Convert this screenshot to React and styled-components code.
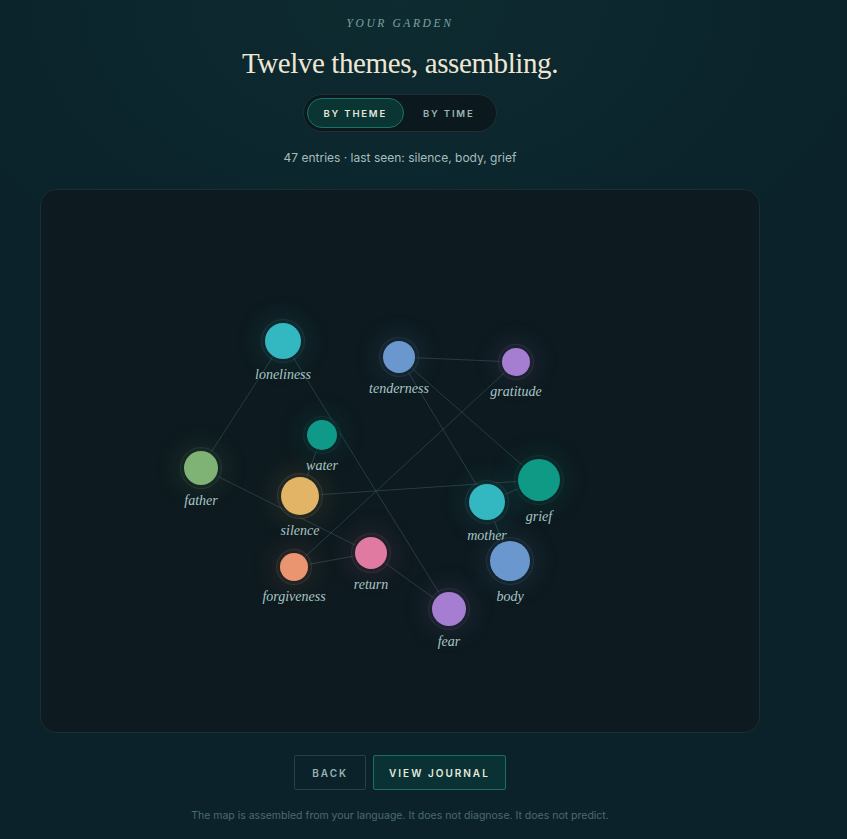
import * as React from "react";
import styled, { createGlobalStyle } from "styled-components";

const GlobalStyle = createGlobalStyle`
  html, body {
    margin: 0;
    padding: 0;
    background: #0b232a;
  }
  body {
    font-family: Inter, "Open Sans", sans-serif;
    -webkit-font-smoothing: antialiased;
  }
`;

const Backdrop = styled.div`
  min-height: 839px;
  background: radial-gradient(ellipse 60% 40% at 47% 0%, #0d2b30 0%, rgba(11, 35, 42, 0) 100%),
    #0b222a;
`;

const Page = styled.div`
  width: 800px;
  box-sizing: border-box;
  padding-top: 16px;
  display: flex;
  flex-direction: column;
  align-items: center;
`;

const Eyebrow = styled.div`
  font-family: "Liberation Serif", "DejaVu Serif", serif;
  font-style: italic;
  font-size: 11.5px;
  letter-spacing: 2.6px;
  color: #7ea3a2;
  line-height: 14px;
`;

const Title = styled.h1`
  margin: 16px 0 0;
  font-family: "Liberation Serif", "DejaVu Serif", serif;
  font-weight: 400;
  font-size: 29px;
  line-height: 34px;
  letter-spacing: -0.4px;
  color: #efe6d5;
`;

const Toggle = styled.div`
  margin-top: 14px;
  display: flex;
  padding: 3px;
  border-radius: 20px;
  border: 1px solid #1d3034;
  background: #0b191e;
`;

const ToggleOption = styled.button`
  font-family: Inter, "Open Sans", sans-serif;
  font-size: 9.5px;
  font-weight: 600;
  letter-spacing: 1.8px;
  height: 30px;
  padding: 0 ${(p) => (p.$active ? "16px" : "18px")};
  border-radius: 16px;
  border: 1px solid ${(p) => (p.$active ? "#1d7466" : "transparent")};
  background: ${(p) => (p.$active ? "#0a3532" : "transparent")};
  color: ${(p) => (p.$active ? "#e4e6dc" : "#9bb5b4")};
  cursor: pointer;
`;

const Meta = styled.div`
  margin-top: 18px;
  font-size: 12px;
  color: #a6bdbd;
  line-height: 16px;
`;

const Canvas = styled.div`
  position: relative;
  margin-top: 23px;
  width: 720px;
  height: 544px;
  box-sizing: border-box;
  border: 1px solid #1a2f33;
  border-radius: 16px;
  background: #0d1a1f;
  overflow: hidden;
`;

const Edges = styled.svg`
  position: absolute;
  inset: 0;
`;

const Node = styled.div`
  position: absolute;
  width: 0;
  height: 0;
`;

const Dot = styled.div`
  position: absolute;
  left: ${(p) => -p.$r}px;
  top: ${(p) => -p.$r}px;
  width: ${(p) => p.$r * 2}px;
  height: ${(p) => p.$r * 2}px;
  border-radius: 50%;
  background: ${(p) => p.$color};
  box-shadow: 0 0 0 3px rgba(13, 26, 31, 0.55), 0 0 0 4px ${(p) => p.$color}26,
    0 0 26px 8px ${(p) => p.$color}1c;
`;

const Label = styled.div`
  position: absolute;
  left: -60px;
  width: 120px;
  top: ${(p) => p.$r + 8}px;
  text-align: center;
  font-family: "Liberation Serif", "DejaVu Serif", serif;
  font-style: italic;
  font-size: 14px;
  line-height: 16px;
  color: #a9c6c6;
`;

const Actions = styled.div`
  margin-top: 22px;
  display: flex;
  gap: 7px;
`;

const ActionButton = styled.button`
  height: 35px;
  padding: 0 ${(p) => (p.$primary ? "15px" : "17px")};
  border-radius: 2px;
  font-family: Inter, "Open Sans", sans-serif;
  font-size: 10px;
  font-weight: 600;
  letter-spacing: 2px;
  border: 1px solid ${(p) => (p.$primary ? "#1b6e62" : "#28403f")};
  background: ${(p) => (p.$primary ? "#0a3133" : "transparent")};
  color: ${(p) => (p.$primary ? "#e6e9df" : "#97b1b1")};
  cursor: pointer;
`;

const Footnote = styled.p`
  margin: 19px 0 0;
  font-size: 10.5px;
  color: #4c6a6c;
`;

// positions relative to the canvas
const nodes = {
  loneliness: { x: 242, y: 151, r: 18, color: "#33b8c2" },
  tenderness: { x: 358, y: 167, r: 16, color: "#6b97cf" },
  gratitude: { x: 475, y: 172, r: 14, color: "#a57ed1" },
  water: { x: 281, y: 245, r: 15, color: "#0f9988" },
  father: { x: 160, y: 278, r: 17, color: "#7fb275" },
  silence: { x: 259, y: 306, r: 19, color: "#e1b466" },
  grief: { x: 498, y: 290, r: 21, color: "#0f9a86" },
  mother: { x: 446, y: 312, r: 18, color: "#33b8c2" },
  return: { x: 330, y: 363, r: 16, color: "#e07aa0" },
  forgiveness: { x: 253, y: 377, r: 14, color: "#ea9470" },
  body: { x: 469, y: 371, r: 20, color: "#6b97cf" },
  fear: { x: 408, y: 419, r: 17, color: "#a57ed1" },
};

const links = [
  ["loneliness", "father"],
  ["loneliness", "fear"],
  ["tenderness", "gratitude"],
  ["tenderness", "mother"],
  ["tenderness", "grief"],
  ["gratitude", "forgiveness"],
  ["silence", "grief"],
  ["mother", "grief"],
  ["mother", "body"],
  ["water", "silence"],
  ["father", "return"],
  ["forgiveness", "return"],
  ["return", "fear"],
];

export default function App() {
  return (
    <>
      <GlobalStyle />
      <Backdrop>
        <Page>
          <Eyebrow>YOUR GARDEN</Eyebrow>
          <Title>Twelve themes, assembling.</Title>
          <Toggle>
            <ToggleOption $active>BY THEME</ToggleOption>
            <ToggleOption>BY TIME</ToggleOption>
          </Toggle>
          <Meta>47 entries · last seen: silence, body, grief</Meta>
          <Canvas>
            <Edges width="720" height="544">
              {links.map(([a, b]) => (
                <line
                  key={a + b}
                  x1={nodes[a].x}
                  y1={nodes[a].y}
                  x2={nodes[b].x}
                  y2={nodes[b].y}
                  stroke="#3a5a5c"
                  strokeOpacity="0.55"
                  strokeWidth="1"
                />
              ))}
            </Edges>
            {Object.entries(nodes).map(([name, n]) => (
              <Node key={name} style={{ left: n.x, top: n.y }}>
                <Dot $r={n.r} $color={n.color} />
                <Label $r={n.r}>{name}</Label>
              </Node>
            ))}
          </Canvas>
          <Actions>
            <ActionButton>BACK</ActionButton>
            <ActionButton $primary>VIEW JOURNAL</ActionButton>
          </Actions>
          <Footnote>
            The map is assembled from your language. It does not diagnose. It does not predict.
          </Footnote>
        </Page>
      </Backdrop>
    </>
  );
}
